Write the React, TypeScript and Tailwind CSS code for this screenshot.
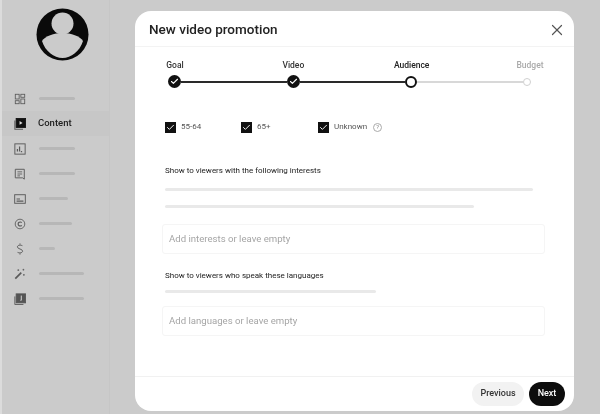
import { Check, X } from "lucide-react";

const font = { fontFamily: "Roboto, 'Liberation Sans', sans-serif" };

function Bar({ cls }: { cls: string }) {
  return <div className={`rounded-full ${cls}`} />;
}

const icons: Record<string, React.ReactNode> = {
  dashboard: (
    <>
      <rect x="1.5" y="1.5" width="4.5" height="5.5" strokeWidth="1" />
      <rect x="8" y="1.5" width="4.5" height="3.5" strokeWidth="1" />
      <rect x="1.5" y="9" width="4.5" height="3.5" strokeWidth="1" />
      <rect x="8" y="7" width="4.5" height="5.5" strokeWidth="1" />
    </>
  ),
  content: (
    <>
      <path d="M1 3v10h9.5" strokeWidth="1.2" />
      <rect x="2.5" y="0.5" width="11" height="10.5" fill="#111" stroke="#111" />
      <path d="M6.5 3.5v4.5l3.5-2.2z" fill="#ddd" stroke="none" />
    </>
  ),
  analytics: (
    <>
      <rect x="1" y="1" width="12" height="12" strokeWidth="1.1" />
      <path d="M4 10V7M6.5 10V4M9.5 10H8" strokeWidth="1.4" />
    </>
  ),
  comments: (
    <>
      <path d="M1.5 1.5h10.5v11.5l-2-1.5H1.5z" strokeWidth="1.1" />
      <path d="M4 4.5h5.5M4 7h5.5M4 9.2h3" strokeWidth="1" />
    </>
  ),
  subtitles: (
    <>
      <rect x="0.8" y="2" width="12.4" height="10" strokeWidth="1.1" />
      <path d="M3 9.5h8M3 7h4" strokeWidth="1.3" />
    </>
  ),
  copyright: (
    <>
      <circle cx="7" cy="7" r="5.6" strokeWidth="1" />
      <path d="M9 5.4a2.4 2.4 0 1 0 0 3.2" strokeWidth="1.3" />
    </>
  ),
  dollar: <path d="M10 3.5C9.500 2.400 4 1.800 4 4.500 4 7.500 10 6.500 10 9.500 10 12.200 4.500 11.800 4 10.500M7 0.500v1.500M7 12v1.500" strokeWidth="1.1" />,
  wand: (
    <>
      <path d="M1.500 12.500 8.500 5.500" strokeWidth="2" />
      <path d="M4 2.500h2M5 1.500v2M11 1v2M10 2h2M11.500 7v2M10.500 8h2" strokeWidth="0.9" />
    </>
  ),
  library: (
    <>
      <path d="M1 4v9.500h10" strokeWidth="1.1" />
      <rect x="2.500" y="1" width="11" height="10.500" fill="#555" stroke="#555" />
      <path d="M8.500 3v5.500M7.500 8.500h1" stroke="#ddd" strokeWidth="1.100" />
    </>
  ),
};

const navItems = [
  { icon: "dashboard", bar: "w-[36px]" },
  { icon: "content", label: "Content" },
  { icon: "analytics", bar: "w-[36px]" },
  { icon: "comments", bar: "w-[36px]" },
  { icon: "subtitles", bar: "w-[29px]" },
  { icon: "copyright", bar: "w-[33px]" },
  { icon: "dollar", bar: "w-[16px]" },
  { icon: "wand", bar: "w-[45px]" },
  { icon: "library", bar: "w-[45px]" },
];

function Sidebar() {
  return (
    <aside className="w-[108px] shrink-0 border-r border-[#c6c6c6] pt-[8px]">
      <div className="flex pl-[34px]">
        <svg width="53" height="53" viewBox="0 0 53 53">
          <circle cx="26.500" cy="26.500" r="26" fill="#0a0a0a" />
          <circle cx="26.500" cy="15.500" r="11" fill="#cbcbcb" />
          <path d="M6 33c3-5 12-8 20.500-8s17.500 3 20.500 8c-3 10-12 17-20.500 17S9 43 6 33z" fill="#cbcbcb" />
        </svg>
      </div>
      <nav className="mt-[25px]">
        {navItems.map((item) => (
          <div
            key={item.icon}
            className={`flex h-[25px] items-center pl-[12px] ${item.label ? "bg-[#c7c7c7]" : ""}`}
          >
            <svg
              width="12"
              height="12"
              viewBox="0 0 14 14"
              fill="none"
              stroke="#5a5a5a"
              className="shrink-0"
            >
              {icons[item.icon]}
            </svg>
            {item.label ? (
              <span className="ml-[12px] text-[9.500px] font-medium text-[#222]">{item.label}</span>
            ) : (
              <Bar cls={`ml-[13px] h-[3px] bg-[#b7b7b7] ${item.bar}`} />
            )}
          </div>
        ))}
      </nav>
    </aside>
  );
}

function Stepper() {
  const steps = [
    { label: "Goal", cls: "font-medium text-[#333]" },
    { label: "Video", cls: "font-medium text-[#333]" },
    { label: "Audience", cls: "font-medium text-[#222]" },
    { label: "Budget", cls: "font-medium text-[#aaa]" },
  ];
  return (
    <div className="ml-[16px] w-[403px] pt-[12px]">
      <div className="flex justify-between">
        {steps.map((s) => (
          <div key={s.label} className={`w-[48px] text-center text-[8.500px] leading-[12px] ${s.cls}`}>
            {s.label}
          </div>
        ))}
      </div>
      <div className="mt-[4px] ml-[17px] flex w-[363px] items-center">
        <span className="flex h-[13px] w-[13px] shrink-0 items-center justify-center rounded-full bg-[#111]">
          <Check size={9} strokeWidth={3} color="#fff" />
        </span>
        <div className="h-[2px] flex-1 bg-[#2a2a2a]" />
        <span className="flex h-[13px] w-[13px] shrink-0 items-center justify-center rounded-full bg-[#111]">
          <Check size={9} strokeWidth={3} color="#fff" />
        </span>
        <div className="h-[2px] flex-1 bg-[#2a2a2a]" />
        <span className="h-[12px] w-[12px] shrink-0 rounded-full border-2 border-[#111] bg-white" />
        <div className="h-[2px] flex-1 bg-[#d8d8d8]" />
        <span className="h-[8px] w-[8px] shrink-0 rounded-full border-[1.500px] border-[#d0d0d0] bg-white" />
      </div>
    </div>
  );
}

function AgeCheck({ label, cls }: { label: string; cls: string }) {
  return (
    <div className={`flex items-center gap-[5px] ${cls}`}>
      <span className="flex h-[11px] w-[11px] items-center justify-center bg-[#111]">
        <Check size={9} strokeWidth={2.500} color="#fff" />
      </span>
      <span className="text-[8px] text-[#555]">{label}</span>
    </div>
  );
}

function Field({ text }: { text: string }) {
  return (
    <div className="ml-[27px] flex h-[30px] w-[383px] items-center rounded-[3px] border border-[#f5f5f5] pl-[6px] text-[9.600px] text-[#a5a5a5]">
      {text}
    </div>
  );
}

function Modal() {
  return (
    <div className="absolute top-[11px] left-[133px] flex h-[400px] w-[439px] flex-col rounded-[16px] bg-white">
      <header className="flex h-[36px] shrink-0 items-center justify-between border-b border-[#f3f3f3] pt-[2px] pr-[8px] pl-[14px]">
        <h1 className="text-[13.500px] font-medium text-[#222]">New video promotion</h1>
        <X size={18} strokeWidth={1.600} color="#555" />
      </header>

      <Stepper />

      <div className="mt-[33px] ml-[30px] flex items-center">
        <AgeCheck label="55-64" cls="w-[76px]" />
        <AgeCheck label="65+" cls="w-[77px]" />
        <AgeCheck label="Unknown" cls="" />
        <span className="ml-[6px] flex h-[9px] w-[9px] items-center justify-center rounded-full border border-[#aaa] text-[6px] leading-none text-[#888]">
          ?
        </span>
      </div>

      <div className="mt-[32px] ml-[30px] text-[8px] leading-[12px] text-[#222]">
        Show to viewers with the following interests
      </div>
      <Bar cls="mt-[11px] ml-[30px] h-[3px] w-[368px] bg-[#e9e9e9]" />
      <Bar cls="mt-[14px] ml-[30px] h-[3px] w-[309px] bg-[#e9e9e9]" />
      <div className="mt-[16px]">
        <Field text="Add interests or leave empty" />
      </div>

      <div className="mt-[16px] ml-[30px] text-[8px] leading-[12px] text-[#222]">
        Show to viewers who speak these languages
      </div>
      <Bar cls="mt-[8px] ml-[30px] h-[3px] w-[211px] bg-[#e9e9e9]" />
      <div className="mt-[13px]">
        <Field text="Add languages or leave empty" />
      </div>

      <footer className="mt-auto flex h-[35px] shrink-0 items-center justify-end gap-[5px] border-t border-[#f1f1f1] pr-[9px]">
        <button className="h-[24px] w-[52px] rounded-full bg-[#f2f2f2] text-[9px] font-medium text-[#333]">
          Previous
        </button>
        <button className="h-[24px] w-[36px] rounded-full bg-[#0d0d0d] text-[9px] font-medium text-white">
          Next
        </button>
      </footer>
    </div>
  );
}

export default function App() {
  return (
    <div
      className="relative flex h-[414px] w-[600px] overflow-hidden border-l-2 border-[#dcdcdc] bg-[#cbcbcb] blur-[0.4px]"
      style={font}
    >
      <Sidebar />
      <Modal />
    </div>
  );
}
